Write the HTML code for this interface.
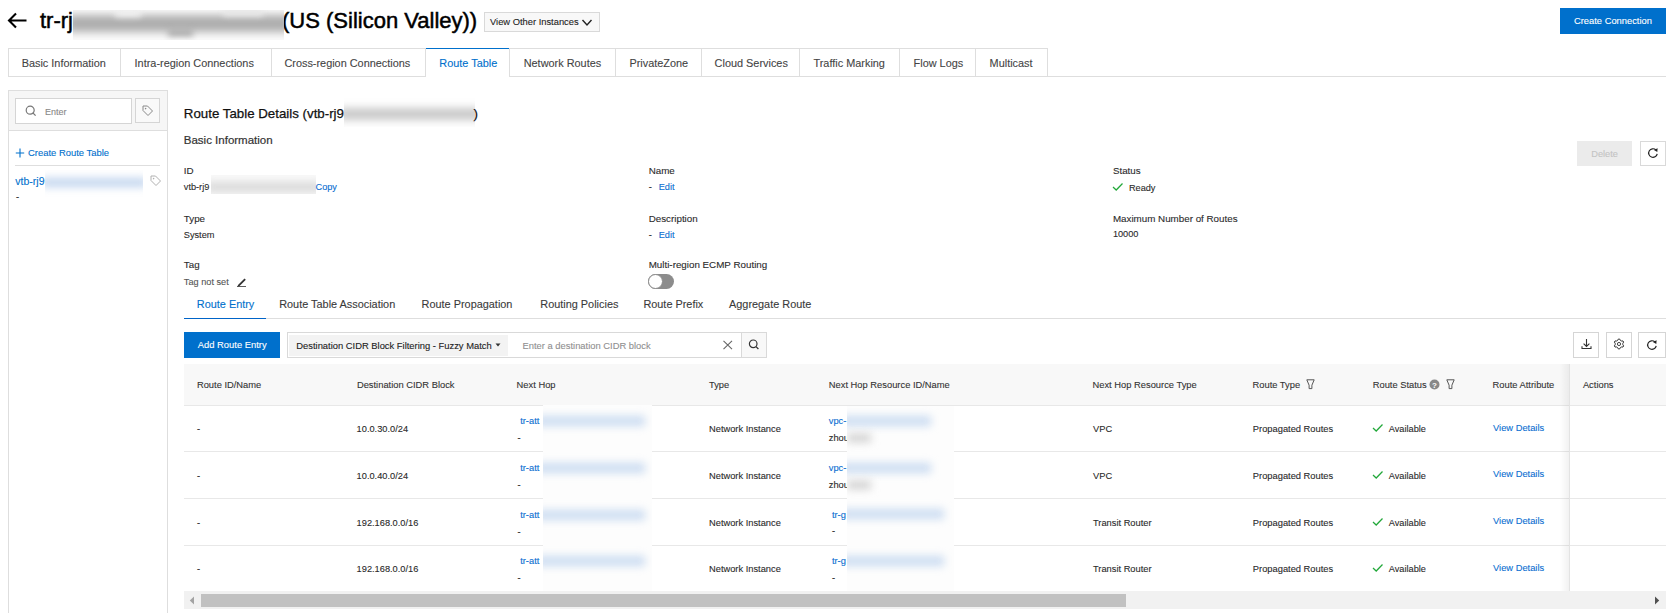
<!DOCTYPE html>
<html><head><meta charset="utf-8"><style>
html,body{margin:0;padding:0;background:#fff;width:1672px;height:613px;overflow:hidden;position:relative}
.t{position:absolute;white-space:nowrap;font-family:"Liberation Sans", sans-serif;-webkit-text-stroke:0.1px currentColor}
.r{position:absolute;display:block}
</style></head><body>
<svg class="r" style="left:6px;top:10px;" width="24" height="22" viewBox="0 0 24 22"><path d="M20.5 10.5H3.5M10 3.5L3 10.5L10 17.5" fill="none" stroke="#000" stroke-width="2.1"/></svg>
<div class="t" style="left:40.0px;top:10px;font-size:22px;line-height:22px;color:#000;-webkit-text-stroke:0.5px #000">tr-rj</div>
<div class="t" style="left:282.0px;top:10px;font-size:22px;line-height:22px;color:#000;-webkit-text-stroke:0.5px #000">(US (Silicon Valley))</div>
<div class="r" style="left:73px;top:10px;width:211px;height:30px;overflow:hidden;background:#fbfbfb"><div style="position:absolute;left:-6px;right:-6px;top:5px;height:17px;background:#adadad;filter:blur(4px)"></div><div style="position:absolute;left:42px;width:26px;top:-2px;height:9px;background:#f0f0f0;filter:blur(3px)"></div><div style="position:absolute;left:150px;width:40px;top:-2px;height:8px;background:#e8e8e8;filter:blur(3px)"></div><div style="position:absolute;left:95px;width:25px;top:20px;height:6px;background:#a5a5a5;filter:blur(3px)"></div></div>
<div class="r" style="left:484px;top:12px;width:116px;height:20px;border:1px solid #d9d9d9;background:#f8f8f8;box-sizing:border-box"></div>
<div class="t" style="left:490.0px;top:18px;font-size:9.35px;line-height:9.35px;color:#222;">View Other Instances</div>
<svg class="r" style="left:581px;top:18px;" width="12" height="9" viewBox="0 0 12 9"><path d="M1.5 2L6 7L10.5 2" fill="none" stroke="#222" stroke-width="1.4"/></svg>
<div class="r" style="left:1560px;top:8px;width:106px;height:26px;background:#0070cc"></div>
<div class="t" style="left:1574.0px;top:17px;font-size:9.35px;line-height:9.35px;color:#fff;">Create Connection</div>
<div class="r" style="left:8px;top:76px;width:1658px;height:1px;background:#dedede"></div>
<div class="r" style="left:8px;top:48px;width:1040px;height:1px;background:#dedede"></div>
<div class="r" style="left:8px;top:48px;width:1px;height:29px;background:#dedede"></div>
<div class="r" style="left:120px;top:48px;width:1px;height:29px;background:#dedede"></div>
<div class="r" style="left:271px;top:48px;width:1px;height:29px;background:#dedede"></div>
<div class="r" style="left:425px;top:48px;width:1px;height:29px;background:#dedede"></div>
<div class="r" style="left:509px;top:48px;width:1px;height:29px;background:#dedede"></div>
<div class="r" style="left:615px;top:48px;width:1px;height:29px;background:#dedede"></div>
<div class="r" style="left:701px;top:48px;width:1px;height:29px;background:#dedede"></div>
<div class="r" style="left:799px;top:48px;width:1px;height:29px;background:#dedede"></div>
<div class="r" style="left:899px;top:48px;width:1px;height:29px;background:#dedede"></div>
<div class="r" style="left:975px;top:48px;width:1px;height:29px;background:#dedede"></div>
<div class="r" style="left:1047px;top:48px;width:1px;height:29px;background:#dedede"></div>
<div class="r" style="left:426px;top:49px;width:83px;height:28px;background:#fff"></div>
<div class="r" style="left:426px;top:48px;width:83px;height:1px;background:#0070cc"></div>
<div class="t" style="left:21.7px;top:58px;font-size:10.9px;line-height:10.9px;color:#444;">Basic Information</div>
<div class="t" style="left:134.6px;top:58px;font-size:10.9px;line-height:10.9px;color:#444;">Intra-region Connections</div>
<div class="t" style="left:284.4px;top:58px;font-size:10.9px;line-height:10.9px;color:#444;">Cross-region Connections</div>
<div class="t" style="left:439.3px;top:58px;font-size:10.9px;line-height:10.9px;color:#0070cc;">Route Table</div>
<div class="t" style="left:523.7px;top:58px;font-size:10.9px;line-height:10.9px;color:#444;">Network Routes</div>
<div class="t" style="left:629.4px;top:58px;font-size:10.9px;line-height:10.9px;color:#444;">PrivateZone</div>
<div class="t" style="left:714.6px;top:58px;font-size:10.9px;line-height:10.9px;color:#444;">Cloud Services</div>
<div class="t" style="left:813.5px;top:58px;font-size:10.9px;line-height:10.9px;color:#444;">Traffic Marking</div>
<div class="t" style="left:913.6px;top:58px;font-size:10.9px;line-height:10.9px;color:#444;">Flow Logs</div>
<div class="t" style="left:989.6px;top:58px;font-size:10.9px;line-height:10.9px;color:#444;">Multicast</div>
<div class="r" style="left:8px;top:90px;width:1px;height:523px;background:#dedede"></div>
<div class="r" style="left:167px;top:90px;width:1px;height:523px;background:#dedede"></div>
<div class="r" style="left:9px;top:91px;width:158px;height:39px;background:#f6f6f6"></div>
<div class="r" style="left:8px;top:90px;width:160px;height:1px;background:#dedede"></div>
<div class="r" style="left:8px;top:130px;width:160px;height:1px;background:#dedede"></div>
<div class="r" style="left:15px;top:98px;width:117px;height:26px;border:1px solid #d5d5d5;box-sizing:border-box;background:#fff"></div>
<svg class="r" style="left:24px;top:104px;" width="14" height="14" viewBox="0 0 14 14"><circle cx="6.2" cy="6.2" r="4" fill="none" stroke="#777" stroke-width="1.2"/><path d="M9.1 9.1L11.6 11.6" stroke="#777" stroke-width="1.3"/></svg>
<div class="t" style="left:45.0px;top:108px;font-size:9.0px;line-height:9.0px;color:#888;">Enter</div>
<div class="r" style="left:135px;top:98px;width:25px;height:25px;border:1px solid #d5d5d5;box-sizing:border-box;background:#f9f9f9"></div>
<svg class="r" style="left:141px;top:104px;" width="14" height="14" viewBox="0 0 14 14"><path d="M2 2H6.5L11.5 7L7 11.5L2 6.5Z" fill="none" stroke="#888" stroke-width="1" stroke-linejoin="round"/><circle cx="4.6" cy="4.6" r="0.8" fill="#888"/></svg>
<svg class="r" style="left:15px;top:148px;" width="10" height="10" viewBox="0 0 10 10"><path d="M5 0.5V9.5M0.8 5H9.2" stroke="#0070cc" stroke-width="1.1"/></svg>
<div class="t" style="left:28.0px;top:148px;font-size:9.44px;line-height:9.44px;color:#0070cc;">Create Route Table</div>
<div class="r" style="left:15px;top:165px;width:145px;height:1px;background:#dedede"></div>
<div class="t" style="left:15.3px;top:176px;font-size:10.5px;line-height:10.5px;color:#0070cc;">vtb-rj9</div>
<div class="r" style="left:45px;top:170px;width:98px;height:27px;overflow:hidden;background:#fff"><div style="position:absolute;left:-4px;right:-4px;top:8px;height:9px;background:#c2d5ee;filter:blur(4px)"></div></div>
<svg class="r" style="left:149px;top:174px;" width="14" height="14" viewBox="0 0 14 14"><path d="M2 2H6.5L11.5 7L7 11.5L2 6.5Z" fill="none" stroke="#b0b0b0" stroke-width="1" stroke-linejoin="round"/><circle cx="4.6" cy="4.6" r="0.8" fill="#b0b0b0"/></svg>
<div class="t" style="left:16.0px;top:193px;font-size:9.3px;line-height:9.3px;color:#2a2a2a;">-</div>
<div class="t" style="left:183.8px;top:107px;font-size:13.3px;line-height:13.3px;color:#111;-webkit-text-stroke:0.25px #111">Route Table Details (vtb-rj9</div>
<div class="r" style="left:344px;top:98px;width:131px;height:29px;overflow:hidden;background:#fff"><div style="position:absolute;left:-6px;right:-6px;top:10px;height:12px;background:#c8c8c8;filter:blur(4.5px)"></div></div>
<div class="t" style="left:473.4px;top:107px;font-size:13.3px;line-height:13.3px;color:#111;-webkit-text-stroke:0.25px #111">)</div>
<div class="t" style="left:183.8px;top:135px;font-size:11.5px;line-height:11.5px;color:#333;-webkit-text-stroke:0.2px #333">Basic Information</div>
<div class="t" style="left:183.8px;top:166px;font-size:9.8px;line-height:9.8px;color:#2a2a2a;">ID</div>
<div class="t" style="left:648.7px;top:166px;font-size:9.8px;line-height:9.8px;color:#2a2a2a;">Name</div>
<div class="t" style="left:1112.9px;top:166px;font-size:9.8px;line-height:9.8px;color:#2a2a2a;">Status</div>
<div class="t" style="left:183.8px;top:183px;font-size:9.2px;line-height:9.2px;color:#2a2a2a;">vtb-rj9</div>
<div class="r" style="left:211px;top:175px;width:105px;height:19px;overflow:hidden;background:#f9f9f9"><div style="position:absolute;left:-5px;right:-5px;top:8px;height:8px;background:#d3d3d3;filter:blur(4px)"></div></div>
<div class="t" style="left:315.5px;top:183px;font-size:9.2px;line-height:9.2px;color:#0a6ed1;">Copy</div>
<div class="t" style="left:648.7px;top:183px;font-size:9.2px;line-height:9.2px;color:#2a2a2a;">-</div>
<div class="t" style="left:658.7px;top:183px;font-size:9.2px;line-height:9.2px;color:#0a6ed1;">Edit</div>
<svg class="r" style="left:1112px;top:182px;" width="12" height="10" viewBox="0 0 12 10"><path d="M1 5L4.2 8L10.5 1.5" fill="none" stroke="#22a83a" stroke-width="1.25"/></svg>
<div class="t" style="left:1128.9px;top:184px;font-size:9.2px;line-height:9.2px;color:#2a2a2a;">Ready</div>
<div class="t" style="left:183.8px;top:214px;font-size:9.8px;line-height:9.8px;color:#2a2a2a;">Type</div>
<div class="t" style="left:648.7px;top:214px;font-size:9.8px;line-height:9.8px;color:#2a2a2a;">Description</div>
<div class="t" style="left:1112.9px;top:214px;font-size:9.8px;line-height:9.8px;color:#2a2a2a;">Maximum Number of Routes</div>
<div class="t" style="left:183.8px;top:231px;font-size:9.2px;line-height:9.2px;color:#2a2a2a;">System</div>
<div class="t" style="left:648.7px;top:231px;font-size:9.2px;line-height:9.2px;color:#2a2a2a;">-</div>
<div class="t" style="left:658.7px;top:231px;font-size:9.2px;line-height:9.2px;color:#0a6ed1;">Edit</div>
<div class="t" style="left:1112.9px;top:230px;font-size:9.2px;line-height:9.2px;color:#2a2a2a;">10000</div>
<div class="t" style="left:183.8px;top:260px;font-size:9.8px;line-height:9.8px;color:#2a2a2a;">Tag</div>
<div class="t" style="left:648.7px;top:260px;font-size:9.8px;line-height:9.8px;color:#2a2a2a;">Multi-region ECMP Routing</div>
<div class="t" style="left:183.8px;top:278px;font-size:9.2px;line-height:9.2px;color:#555;">Tag not set</div>
<svg class="r" style="left:236px;top:277px;" width="11" height="10" viewBox="0 0 11 10"><path d="M2 8L8.5 1.5L9.8 2.8L3.3 9.3L1.5 9.6Z" fill="#333"/><path d="M1 9.5H10" stroke="#333" stroke-width="0.8"/></svg>
<div class="r" style="left:648px;top:274px;width:26px;height:15px;background:#8c8c8c;border-radius:8px"></div>
<div class="r" style="left:648px;top:274px;width:15px;height:15px;background:#fff;border-radius:50%;border:1px solid #8c8c8c;box-sizing:border-box"></div>
<div class="r" style="left:1577px;top:141px;width:55px;height:25px;background:#ebebeb"></div>
<div class="t" style="left:1591.2px;top:150px;font-size:9.27px;line-height:9.27px;color:#c3c3c3;">Delete</div>
<div class="r" style="left:1640px;top:141px;width:26px;height:25px;border:1px solid #d9d9d9;box-sizing:border-box;background:#fff"></div>
<svg class="r" style="left:1647px;top:147px;" width="12" height="12" viewBox="0 0 12 12"><path d="M8.9 2.9A4.3 4.3 0 1 0 10.2 6.8" fill="none" stroke="#222" stroke-width="1.2"/><path d="M6.9 2.9L10.6 1.2L10.3 5.1Z" fill="#222"/></svg>
<div class="r" style="left:184px;top:318px;width:1482px;height:1px;background:#dedede"></div>
<div class="r" style="left:184px;top:318px;width:82px;height:1px;background:#0064c8"></div>
<div class="t" style="left:196.8px;top:299px;font-size:10.9px;line-height:10.9px;color:#0070cc;">Route Entry</div>
<div class="t" style="left:279.2px;top:299px;font-size:10.9px;line-height:10.9px;color:#3a3a3a;">Route Table Association</div>
<div class="t" style="left:421.6px;top:299px;font-size:10.9px;line-height:10.9px;color:#3a3a3a;">Route Propagation</div>
<div class="t" style="left:540.3px;top:299px;font-size:10.9px;line-height:10.9px;color:#3a3a3a;">Routing Policies</div>
<div class="t" style="left:643.4px;top:299px;font-size:10.9px;line-height:10.9px;color:#3a3a3a;">Route Prefix</div>
<div class="t" style="left:729.0px;top:299px;font-size:10.9px;line-height:10.9px;color:#3a3a3a;">Aggregate Route</div>
<div class="r" style="left:184px;top:332px;width:96px;height:26px;background:#0070cc"></div>
<div class="t" style="left:197.8px;top:341px;font-size:9.38px;line-height:9.38px;color:#fff;">Add Route Entry</div>
<div class="r" style="left:287px;top:332px;width:480px;height:26px;border:1px solid #d9d9d9;box-sizing:border-box;background:#fff"></div>
<div class="r" style="left:289px;top:335px;width:219px;height:21px;background:#f3f3f3"></div>
<div class="t" style="left:296.3px;top:341px;font-size:9.39px;line-height:9.39px;color:#222;">Destination CIDR Block Filtering - Fuzzy Match</div>
<svg class="r" style="left:495px;top:343px;" width="7" height="5" viewBox="0 0 7 5"><path d="M0.5 0.5H5.5L3 3.5Z" fill="#333"/></svg>
<div class="t" style="left:522.5px;top:342px;font-size:9.38px;line-height:9.38px;color:#8f8f8f;">Enter a destination CIDR block</div>
<svg class="r" style="left:722px;top:340px;" width="12" height="10" viewBox="0 0 12 10"><path d="M1.5 0.8L10 9.2M10 0.8L1.5 9.2" stroke="#666" stroke-width="1.1"/></svg>
<div class="r" style="left:742px;top:333px;width:24px;height:24px;background:#f8f8f8"></div>
<div class="r" style="left:741px;top:333px;width:1px;height:24px;background:#d9d9d9"></div>
<svg class="r" style="left:747px;top:339px;" width="14" height="12" viewBox="0 0 14 12"><circle cx="6.2" cy="4.8" r="3.8" fill="none" stroke="#333" stroke-width="1.2"/><path d="M9 7.6L11.4 10" stroke="#333" stroke-width="1.3"/></svg>
<div class="r" style="left:1573px;top:332px;width:26px;height:26px;border:1px solid #d5d5d5;box-sizing:border-box;background:#fff"></div>
<div class="r" style="left:1606px;top:332px;width:26px;height:26px;border:1px solid #d5d5d5;box-sizing:border-box;background:#fff"></div>
<div class="r" style="left:1638px;top:332px;width:28px;height:26px;border:1px solid #d5d5d5;box-sizing:border-box;background:#fff"></div>
<svg class="r" style="left:1580px;top:338px;" width="13" height="13" viewBox="0 0 13 13"><path d="M6.5 1V8.5M3.6 5.6L6.5 8.5L9.4 5.6" fill="none" stroke="#333" stroke-width="1.1"/><path d="M2 8.2V10.5H11V8.2" fill="none" stroke="#333" stroke-width="1.1"/></svg>
<svg class="r" style="left:1613px;top:338px;" width="12" height="12" viewBox="0 0 12 12"><path d="M5.35 1.04 L6.65 1.04 L7.45 2.49 L8.31 2.99 L9.97 2.96 L10.62 4.09 L9.77 5.50 L9.77 6.50 L10.62 7.91 L9.97 9.04 L8.31 9.01 L7.45 9.51 L6.65 10.96 L5.35 10.96 L4.55 9.51 L3.69 9.01 L2.03 9.04 L1.38 7.91 L2.23 6.50 L2.23 5.50 L1.38 4.09 L2.03 2.96 L3.69 2.99 L4.55 2.49Z" fill="none" stroke="#333" stroke-width="1" stroke-linejoin="round"/><circle cx="6" cy="6" r="1.6" fill="none" stroke="#333" stroke-width="0.9"/></svg>
<svg class="r" style="left:1646px;top:339px;" width="12" height="12" viewBox="0 0 12 12"><path d="M8.9 2.9A4.3 4.3 0 1 0 10.2 6.8" fill="none" stroke="#222" stroke-width="1.2"/><path d="M6.9 2.9L10.6 1.2L10.3 5.1Z" fill="#222"/></svg>
<div class="r" style="left:184px;top:364px;width:1482px;height:41px;background:#f8f8f8"></div>
<div class="r" style="left:184px;top:405px;width:1482px;height:1px;background:#e8e8e8"></div>
<div class="r" style="left:184px;top:451px;width:1482px;height:1px;background:#e8e8e8"></div>
<div class="r" style="left:184px;top:498px;width:1482px;height:1px;background:#e8e8e8"></div>
<div class="r" style="left:184px;top:545px;width:1482px;height:1px;background:#e8e8e8"></div>
<div class="t" style="left:196.9px;top:381px;font-size:9.35px;line-height:9.35px;color:#333;">Route ID/Name</div>
<div class="t" style="left:356.9px;top:381px;font-size:9.35px;line-height:9.35px;color:#333;">Destination CIDR Block</div>
<div class="t" style="left:516.6px;top:381px;font-size:9.35px;line-height:9.35px;color:#333;">Next Hop</div>
<div class="t" style="left:709.0px;top:381px;font-size:9.35px;line-height:9.35px;color:#333;">Type</div>
<div class="t" style="left:828.8px;top:381px;font-size:9.35px;line-height:9.35px;color:#333;">Next Hop Resource ID/Name</div>
<div class="t" style="left:1092.5px;top:381px;font-size:9.35px;line-height:9.35px;color:#333;">Next Hop Resource Type</div>
<div class="t" style="left:1252.5px;top:381px;font-size:9.35px;line-height:9.35px;color:#333;">Route Type</div>
<div class="t" style="left:1372.7px;top:381px;font-size:9.35px;line-height:9.35px;color:#333;">Route Status</div>
<div class="t" style="left:1492.5px;top:381px;font-size:9.35px;line-height:9.35px;color:#333;">Route Attribute</div>
<div class="t" style="left:1582.9px;top:381px;font-size:9.35px;line-height:9.35px;color:#333;">Actions</div>
<svg class="r" style="left:1306px;top:379px;" width="9" height="11" viewBox="0 0 9 11"><path d="M0.8 0.8H8.2L5.9 6.2V9.6H3.1V6.2Z" fill="none" stroke="#555" stroke-width="1" stroke-linejoin="round"/></svg>
<svg class="r" style="left:1446px;top:379px;" width="9" height="11" viewBox="0 0 9 11"><path d="M0.8 0.8H8.2L5.9 6.2V9.6H3.1V6.2Z" fill="none" stroke="#555" stroke-width="1" stroke-linejoin="round"/></svg>
<svg class="r" style="left:1429px;top:379px;" width="11" height="11" viewBox="0 0 11 11"><circle cx="5.5" cy="5.5" r="5" fill="#888"/><text x="5.5" y="8.6" font-size="8" font-weight="bold" text-anchor="middle" fill="#fff" font-family="Liberation Sans">?</text></svg>
<div class="t" style="left:197.0px;top:425px;font-size:9.3px;line-height:9.3px;color:#2a2a2a;">-</div>
<div class="t" style="left:356.6px;top:425px;font-size:9.26px;line-height:9.26px;color:#2a2a2a;">10.0.30.0/24</div>
<div class="t" style="left:520.2px;top:417px;font-size:9.3px;line-height:9.3px;color:#0a6ed1;">tr-att</div>
<div class="t" style="left:517.6px;top:434px;font-size:9.3px;line-height:9.3px;color:#2a2a2a;">-</div>
<div class="t" style="left:709.0px;top:425px;font-size:9.3px;line-height:9.3px;color:#2a2a2a;">Network Instance</div>
<div class="t" style="left:828.8px;top:417px;font-size:9.3px;line-height:9.3px;color:#0a6ed1;">vpc-</div>
<div class="t" style="left:828.8px;top:434px;font-size:9.3px;line-height:9.3px;color:#2a2a2a;">zhou</div>
<div class="t" style="left:1093.0px;top:425px;font-size:9.3px;line-height:9.3px;color:#2a2a2a;">VPC</div>
<div class="t" style="left:1252.8px;top:425px;font-size:9.34px;line-height:9.34px;color:#2a2a2a;">Propagated Routes</div>
<svg class="r" style="left:1372px;top:423.1px;" width="12" height="10" viewBox="0 0 12 10"><path d="M1 5L4.2 8L10.5 1.5" fill="none" stroke="#22a83a" stroke-width="1.25"/></svg>
<div class="t" style="left:1388.8px;top:425px;font-size:9.21px;line-height:9.21px;color:#2a2a2a;">Available</div>
<div class="t" style="left:1493.0px;top:424px;font-size:9.34px;line-height:9.34px;color:#0a6ed1;">View Details</div>
<div class="t" style="left:197.0px;top:472px;font-size:9.3px;line-height:9.3px;color:#2a2a2a;">-</div>
<div class="t" style="left:356.6px;top:472px;font-size:9.26px;line-height:9.26px;color:#2a2a2a;">10.0.40.0/24</div>
<div class="t" style="left:520.2px;top:464px;font-size:9.3px;line-height:9.3px;color:#0a6ed1;">tr-att</div>
<div class="t" style="left:517.6px;top:481px;font-size:9.3px;line-height:9.3px;color:#2a2a2a;">-</div>
<div class="t" style="left:709.0px;top:472px;font-size:9.3px;line-height:9.3px;color:#2a2a2a;">Network Instance</div>
<div class="t" style="left:828.8px;top:464px;font-size:9.3px;line-height:9.3px;color:#0a6ed1;">vpc-</div>
<div class="t" style="left:828.8px;top:481px;font-size:9.3px;line-height:9.3px;color:#2a2a2a;">zhou</div>
<div class="t" style="left:1093.0px;top:472px;font-size:9.3px;line-height:9.3px;color:#2a2a2a;">VPC</div>
<div class="t" style="left:1252.8px;top:472px;font-size:9.34px;line-height:9.34px;color:#2a2a2a;">Propagated Routes</div>
<svg class="r" style="left:1372px;top:470.0px;" width="12" height="10" viewBox="0 0 12 10"><path d="M1 5L4.2 8L10.5 1.5" fill="none" stroke="#22a83a" stroke-width="1.25"/></svg>
<div class="t" style="left:1388.8px;top:472px;font-size:9.21px;line-height:9.21px;color:#2a2a2a;">Available</div>
<div class="t" style="left:1493.0px;top:470px;font-size:9.34px;line-height:9.34px;color:#0a6ed1;">View Details</div>
<div class="t" style="left:197.0px;top:519px;font-size:9.3px;line-height:9.3px;color:#2a2a2a;">-</div>
<div class="t" style="left:356.6px;top:519px;font-size:9.26px;line-height:9.26px;color:#2a2a2a;">192.168.0.0/16</div>
<div class="t" style="left:520.2px;top:511px;font-size:9.3px;line-height:9.3px;color:#0a6ed1;">tr-att</div>
<div class="t" style="left:517.6px;top:528px;font-size:9.3px;line-height:9.3px;color:#2a2a2a;">-</div>
<div class="t" style="left:709.0px;top:519px;font-size:9.3px;line-height:9.3px;color:#2a2a2a;">Network Instance</div>
<div class="t" style="left:831.9px;top:511px;font-size:9.3px;line-height:9.3px;color:#0a6ed1;">tr-g</div>
<div class="t" style="left:831.9px;top:527px;font-size:9.3px;line-height:9.3px;color:#2a2a2a;">-</div>
<div class="t" style="left:1093.0px;top:519px;font-size:9.3px;line-height:9.3px;color:#2a2a2a;">Transit Router</div>
<div class="t" style="left:1252.8px;top:519px;font-size:9.34px;line-height:9.34px;color:#2a2a2a;">Propagated Routes</div>
<svg class="r" style="left:1372px;top:516.7px;" width="12" height="10" viewBox="0 0 12 10"><path d="M1 5L4.2 8L10.5 1.5" fill="none" stroke="#22a83a" stroke-width="1.25"/></svg>
<div class="t" style="left:1388.8px;top:519px;font-size:9.21px;line-height:9.21px;color:#2a2a2a;">Available</div>
<div class="t" style="left:1493.0px;top:517px;font-size:9.34px;line-height:9.34px;color:#0a6ed1;">View Details</div>
<div class="t" style="left:197.0px;top:565px;font-size:9.3px;line-height:9.3px;color:#2a2a2a;">-</div>
<div class="t" style="left:356.6px;top:565px;font-size:9.26px;line-height:9.26px;color:#2a2a2a;">192.168.0.0/16</div>
<div class="t" style="left:520.2px;top:557px;font-size:9.3px;line-height:9.3px;color:#0a6ed1;">tr-att</div>
<div class="t" style="left:517.6px;top:574px;font-size:9.3px;line-height:9.3px;color:#2a2a2a;">-</div>
<div class="t" style="left:709.0px;top:565px;font-size:9.3px;line-height:9.3px;color:#2a2a2a;">Network Instance</div>
<div class="t" style="left:831.9px;top:557px;font-size:9.3px;line-height:9.3px;color:#0a6ed1;">tr-g</div>
<div class="t" style="left:831.9px;top:574px;font-size:9.3px;line-height:9.3px;color:#2a2a2a;">-</div>
<div class="t" style="left:1093.0px;top:565px;font-size:9.3px;line-height:9.3px;color:#2a2a2a;">Transit Router</div>
<div class="t" style="left:1252.8px;top:565px;font-size:9.34px;line-height:9.34px;color:#2a2a2a;">Propagated Routes</div>
<svg class="r" style="left:1372px;top:563.3px;" width="12" height="10" viewBox="0 0 12 10"><path d="M1 5L4.2 8L10.5 1.5" fill="none" stroke="#22a83a" stroke-width="1.25"/></svg>
<div class="t" style="left:1388.8px;top:565px;font-size:9.21px;line-height:9.21px;color:#2a2a2a;">Available</div>
<div class="t" style="left:1493.0px;top:564px;font-size:9.34px;line-height:9.34px;color:#0a6ed1;">View Details</div>
<div class="r" style="left:543px;top:405px;width:109px;height:187px;overflow:hidden;background:#fdfdfd"><div style="position:absolute;left:-6px;width:108px;top:11.100000000000023px;height:10px;background:#cbdcf1;filter:blur(4.5px)"></div><div style="position:absolute;left:-6px;width:108px;top:58.0px;height:10px;background:#cbdcf1;filter:blur(4.5px)"></div><div style="position:absolute;left:-6px;width:108px;top:104.70000000000005px;height:10px;background:#cbdcf1;filter:blur(4.5px)"></div><div style="position:absolute;left:-6px;width:108px;top:151.29999999999995px;height:10px;background:#cbdcf1;filter:blur(4.5px)"></div></div>
<div class="r" style="left:847px;top:406px;width:107px;height:186px;overflow:hidden;background:#fdfdfd"><div style="position:absolute;left:-6px;width:90px;top:9.600000000000023px;height:10px;background:#cbdcf1;filter:blur(4.5px)"></div><div style="position:absolute;left:0px;width:24px;top:28.100000000000023px;height:8px;background:#cfcfcf;filter:blur(4.5px)"></div><div style="position:absolute;left:-6px;width:90px;top:56.5px;height:10px;background:#cbdcf1;filter:blur(4.5px)"></div><div style="position:absolute;left:0px;width:24px;top:75.0px;height:8px;background:#cfcfcf;filter:blur(4.5px)"></div><div style="position:absolute;left:-6px;width:103px;top:103.20000000000005px;height:10px;background:#cbdcf1;filter:blur(4.5px)"></div><div style="position:absolute;left:-6px;width:103px;top:149.79999999999995px;height:10px;background:#cbdcf1;filter:blur(4.5px)"></div></div>
<div class="r" style="left:1560px;top:364px;width:10px;height:227px;background:linear-gradient(to right, rgba(0,0,0,0), rgba(0,0,0,0.06))"></div>
<div class="r" style="left:1569px;top:364px;width:1px;height:227px;background:#e3e3e3"></div>
<div class="r" style="left:1570px;top:364px;width:96px;height:41px;background:#f8f8f8"></div>
<div class="r" style="left:1570px;top:405px;width:96px;height:186px;background:#fff"></div>
<div class="r" style="left:1570px;top:405px;width:96px;height:1px;background:#e8e8e8"></div>
<div class="r" style="left:1570px;top:451px;width:96px;height:1px;background:#e8e8e8"></div>
<div class="r" style="left:1570px;top:498px;width:96px;height:1px;background:#e8e8e8"></div>
<div class="r" style="left:1570px;top:545px;width:96px;height:1px;background:#e8e8e8"></div>
<div class="t" style="left:1582.9px;top:381px;font-size:9.35px;line-height:9.35px;color:#333;">Actions</div>
<div class="r" style="left:184px;top:591px;width:1482px;height:18px;background:#f1f1f1"></div>
<svg class="r" style="left:189px;top:596px;" width="6" height="9" viewBox="0 0 6 9"><path d="M5 0.5V8.5L0.8 4.5Z" fill="#a3a3a3"/></svg>
<div class="r" style="left:201px;top:594px;width:925px;height:13px;background:#c1c1c1"></div>
<svg class="r" style="left:1654px;top:596px;" width="6" height="9" viewBox="0 0 6 9"><path d="M1 0.5V8.5L5.2 4.5Z" fill="#505050"/></svg>
</body></html>
